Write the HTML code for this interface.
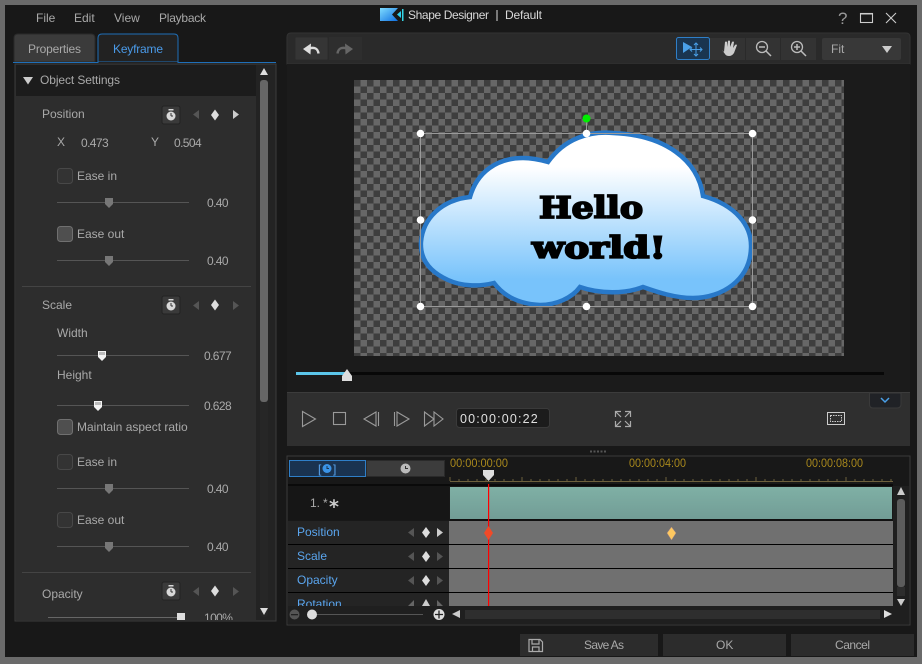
<!DOCTYPE html>
<html><head><meta charset="utf-8"><style>
html,body{margin:0;padding:0;background:#666;width:922px;height:664px;overflow:hidden}
svg{display:block;position:absolute;left:0;top:0}
text{font-family:"Liberation Sans",sans-serif;font-size:12px;fill:#a9a9a9}
.b{fill:#5aa5ee}
.n{letter-spacing:-.6px}
.t{fill:#a8881c;font-size:11.5px}
</style></head><body>
<svg width="922" height="664" viewBox="0 0 922 664" xmlns="http://www.w3.org/2000/svg">
<defs>
<pattern id="ck" x="354" y="80" width="13" height="13" patternUnits="userSpaceOnUse">
<rect width="13" height="13" fill="#676767"/><rect width="6.5" height="6.5" fill="#3e3e3e"/><rect x="6.5" y="6.5" width="6.5" height="6.5" fill="#3e3e3e"/>
</pattern>
<linearGradient id="cg" x1="0" y1="0" x2="0" y2="1"><stop offset=".2" stop-color="#fff"/><stop offset=".85" stop-color="#78c3fb"/></linearGradient>
<linearGradient id="tg" x1="0" y1="0" x2="0" y2="1"><stop offset="0" stop-color="#7fb0a5"/><stop offset="1" stop-color="#729d96"/></linearGradient>
<linearGradient id="lg" x1="0" y1="0" x2="1" y2="1"><stop offset="0" stop-color="#7fdcff"/><stop offset="1" stop-color="#0f6fe0"/></linearGradient>
<symbol id="kf" overflow="visible"><path d="M-4 0L0-5.500L4 0L0 5.500Z"/></symbol>
<g id="stop"><rect x="-9" y="-9" width="18" height="18" rx="2" fill="#3a3a3a" stroke="#222"/><circle cy="1" r="4.500" fill="#d8d8d8"/><rect x="-2.500" y="-6" width="5" height="1.500" fill="#d8d8d8"/><path d="M0 1V-2M0 1H2" stroke="#333" fill="none"/></g>
<g id="sl"><path d="M-4-5H4V1L0 5L-4 1Z" fill="#777"/></g>
<g id="slw"><path d="M-4-5H4V1L0 5L-4 1Z" fill="#f2f2f2"/><rect x="-3" y="-4" width="6" height="3" fill="#bbb"/></g>
</defs>

<rect width="922" height="664" fill="#6a6a6a"/>
<rect x="5" y="5" width="912" height="652" fill="#181818"/>

<!-- title -->
<text x="36" y="22">File</text><text x="74" y="22">Edit</text><text x="114" y="22">View</text><text x="159" y="22" textLength="47">Playback</text>
<path d="M380 8H398L392 14.500L398 21H380Z" fill="url(#lg)"/>
<path d="M397 14.500L401 11V18Z" fill="#2fd0f0"/><rect x="402" y="9" width="1.500" height="12" fill="#35d5e5"/>
<text x="408" y="19" style="fill:#d8d8d8" textLength="81">Shape Designer</text><rect x="496.500" y="10" width="1" height="11" fill="#ddd"/><text x="505" y="19" style="fill:#d8d8d8" textLength="37">Default</text>
<text x="838" y="24" style="font-size:17px;fill:#999">?</text>
<rect x="860.500" y="13.500" width="12" height="9" fill="none" stroke="#ccc" stroke-width="1.100"/><rect x="860" y="13" width="13" height="1.500" fill="#ccc"/>
<path d="M886 13L896 23M896 13L886 23" stroke="#ccc" stroke-width="1.100"/>

<!-- left tabs -->
<path d="M14 62V38Q14 34 18 34H91Q95 34 95 38V62Z" fill="#3b3b3b" stroke="#2a2a2a"/>
<text x="28" y="53" style="fill:#a9a9a9" textLength="53">Properties</text>
<path d="M98 62V38Q98 34 102 34H174Q178 34 178 38V62Z" fill="#222" stroke="#1f6fb8"/>
<text x="113" y="53" style="fill:#4a9ae8" textLength="50">Keyframe</text>
<rect x="13" y="62" width="263" height="1" fill="#1f6fb8"/>
<rect x="98.500" y="62" width="79" height="1" fill="#222"/>

<!-- left panel -->
<rect x="15" y="64" width="261" height="557" fill="#232323" stroke="#3b3b3b"/>
<rect x="16" y="65" width="240" height="31" fill="#1c1c1c"/>
<rect x="16" y="96" width="240" height="524" fill="#2d2d2d"/>
<path d="M23 77H33L28 84.500Z" fill="#ccc"/>
<text x="40" y="84" textLength="80">Object Settings</text>
<rect x="260" y="80" width="8" height="537" rx="3" fill="#262626"/>
<rect x="260" y="80" width="8" height="322" rx="3" fill="#666"/>
<path d="M264 68L260 75H268Z" fill="#ddd"/><path d="M260 608H268L264 615Z" fill="#ddd"/>

<text x="42" y="118">Position</text>
<use href="#stop" x="171" y="115"/>
<path d="M199 110V119L193 114.500Z" fill="#555"/><use href="#kf" x="215" y="115" fill="#ddd"/><path d="M233 110V119L239 114.500Z" fill="#ccc"/>
<text x="57" y="146">X</text><text x="81" y="147" class="n">0.473</text><text x="151" y="146">Y</text><text x="174" y="147" class="n">0.504</text>

<rect x="57.500" y="168.500" width="15" height="15" rx="3" fill="#333" stroke="#484848"/>
<text x="77" y="180">Ease in</text>
<rect x="57" y="202" width="132" height="1" fill="#555"/><use href="#sl" x="109" y="203"/><text x="207" y="207" class="n">0.40</text>

<rect x="57.500" y="226.500" width="15" height="15" rx="3" fill="#4f4f4f" stroke="#707070"/>
<text x="77" y="238">Ease out</text>
<rect x="57" y="260" width="132" height="1" fill="#555"/><use href="#sl" x="109" y="261"/><text x="207" y="265" class="n">0.40</text>
<rect x="22" y="286" width="229" height="1" fill="#444"/>

<text x="42" y="309">Scale</text>
<use href="#stop" x="171" y="305"/>
<path d="M199 301V310L193 305.500Z" fill="#555"/><use href="#kf" x="215" y="305" fill="#ddd"/><path d="M233 301V310L239 305.500Z" fill="#555"/>
<text x="57" y="337">Width</text>
<rect x="57" y="355" width="132" height="1" fill="#555"/><use href="#slw" x="102" y="356"/><text x="204" y="360" class="n">0.677</text>
<text x="57" y="379">Height</text>
<rect x="57" y="405" width="132" height="1" fill="#555"/><use href="#slw" x="98" y="406"/><text x="204" y="410" class="n">0.628</text>
<rect x="57.500" y="419.500" width="15" height="15" rx="3" fill="#4f4f4f" stroke="#707070"/>
<text x="77" y="431">Maintain aspect ratio</text>
<rect x="57.500" y="454.500" width="15" height="15" rx="3" fill="#333" stroke="#484848"/>
<text x="77" y="466">Ease in</text>
<rect x="57" y="488" width="132" height="1" fill="#555"/><use href="#sl" x="109" y="489"/><text x="207" y="493" class="n">0.40</text>
<rect x="57.500" y="512.500" width="15" height="15" rx="3" fill="#333" stroke="#484848"/>
<text x="77" y="524">Ease out</text>
<rect x="57" y="546" width="132" height="1" fill="#555"/><use href="#sl" x="109" y="547"/><text x="207" y="551" class="n">0.40</text>
<rect x="22" y="572" width="229" height="1" fill="#444"/>
<text x="42" y="598">Opacity</text>
<use href="#stop" x="171" y="591"/>
<path d="M199 587V596L193 591.500Z" fill="#555"/><use href="#kf" x="215" y="591" fill="#ddd"/><path d="M233 587V596L239 591.500Z" fill="#555"/>
<rect x="48" y="617" width="130" height="1" fill="#666"/>
<rect x="177" y="613" width="8" height="7" fill="#ddd"/>
<svg x="200" y="610" width="40" height="10"><text x="4" y="12" class="n">100%</text></svg>

<!-- toolbar -->
<path d="M287 64V37Q287 33 291 33H906Q910 33 910 37V64Z" fill="#2a2a2a" stroke="#333"/>
<rect x="295" y="37" width="33" height="23" rx="1" fill="#353535" stroke="#2a2a2a"/>
<rect x="329" y="37" width="33" height="23" fill="#2e2e2e"/>
<path d="M303 49L311 43.500L310.500 54.500Z" fill="#ddd"/><path d="M309 48.500Q317.500 46 318.500 53.500" fill="none" stroke="#ddd" stroke-width="2.400"/>
<path d="M353 49L345 43.500L345.500 54.500Z" fill="#666"/><path d="M347 48.500Q338.500 46 337.500 53.500" fill="none" stroke="#666" stroke-width="2.400"/>
<rect x="676.500" y="37.500" width="33" height="22" rx="2" fill="#1a3550" stroke="#2f7fc8"/>
<path d="M683 42V53L692 47Z" fill="#4aa0e8"/><path d="M696 43V56M690 49.500H702M694 45L696 43L698 45M694 54L696 56L698 54M692 47.500L690 49.500L692 51.500M700 47.500L702 49.500L700 51.500" stroke="#4aa0e8" fill="none"/>
<rect x="710" y="38" width="35" height="22" fill="#333"/><rect x="746" y="38" width="34" height="22" fill="#333"/><rect x="781" y="38" width="35" height="22" fill="#333"/>
<path d="M722 50L724 52L725 42Q726 41 727 42L727 47L728 41Q729 40 730 41L730 47L732 42Q733 41 734 42L733 48L735 45Q736 44 737 45L734 53Q732 56 729 56Q726 56 725 54Z" fill="#ccc"/>
<circle cx="762" cy="47" r="5.500" fill="none" stroke="#bbb" stroke-width="1.300"/><path d="M759 47H765M766 51L771 56" stroke="#bbb" stroke-width="1.500"/>
<circle cx="797" cy="47" r="5.500" fill="none" stroke="#bbb" stroke-width="1.300"/><path d="M794 47H800M797 44V50M801 51L806 56" stroke="#bbb" stroke-width="1.500"/>
<rect x="822" y="38" width="79" height="22" rx="2" fill="#383838"/>
<text x="831" y="53">Fit</text><path d="M882 46H892L887 53Z" fill="#ccc"/>

<!-- preview -->
<rect x="287" y="64" width="623" height="329" fill="#1b1b1b"/>
<rect x="354" y="80" width="490" height="276" fill="url(#ck)"/>
<path d="M548 162C565 138 590 131 613 133C665 135 698 160 703 196C735 205 752 225 751 248C750 280 722 298 693 298C675 298 657 292 643 287C625 294 600 294 580 287C572 298 556 305 540 305C518 304 503 295 494 283C478 287 461 286 448 280C428 271 420 258 421 242C423 218 442 200 470 197C477 172 497 158 523 158C532 158 541 160 548 162Z" fill="url(#cg)" stroke="#2878c8" stroke-width="4.500"/>
<text x="591" y="218" text-anchor="middle" textLength="104" lengthAdjust="spacingAndGlyphs" style="font-family:'DejaVu Serif',serif;font-weight:bold;font-size:30px;fill:#000;stroke:#000;stroke-width:1.800">Hello</text>
<text x="599" y="258" text-anchor="middle" textLength="134" lengthAdjust="spacingAndGlyphs" style="font-family:'DejaVu Serif',serif;font-weight:bold;font-size:30px;fill:#000;stroke:#000;stroke-width:1.800">world!</text>
<rect x="420.500" y="133.500" width="332" height="173" fill="none" stroke="#999"/>
<path d="M586.500 122V133" stroke="#999"/>
<g fill="#fff"><circle cx="420.500" cy="133.500" r="3.800"/><circle cx="586.500" cy="133.500" r="3.800"/><circle cx="752.500" cy="133.500" r="3.800"/><circle cx="420.500" cy="220" r="3.800"/><circle cx="752.500" cy="220" r="3.800"/><circle cx="420.500" cy="306.500" r="3.800"/><circle cx="586.500" cy="306.500" r="3.800"/><circle cx="752.500" cy="306.500" r="3.800"/></g>
<circle cx="586.500" cy="118.500" r="4" fill="#0e0"/>

<rect x="296" y="372" width="588" height="3" fill="#080808"/>
<rect x="296" y="372" width="51" height="3" fill="#5cc6ea"/>
<path d="M347 369L352 376V381H342V376Z" fill="#ddd"/>

<!-- controls -->
<rect x="287" y="392" width="623" height="54" fill="#2f2f2f"/>
<rect x="287" y="392" width="623" height="1" fill="#3c3c3c"/>
<g fill="none" stroke="#9a9a9a" stroke-width="1.100">
<path d="M302.500 411.500V426.500L315.500 419Z"/>
<rect x="333.500" y="412.500" width="12" height="12"/>
<path d="M376 412L364 419L376 426Z"/><path d="M378.500 412V426"/>
<path d="M394.500 412V426"/><path d="M397 412L409 419L397 426Z"/>
<path d="M424.500 412V426L434 419ZM434 412V426L443 419Z"/>
</g>
<rect x="456.500" y="408.500" width="93" height="19" rx="3" fill="#1c1c1c" stroke="#3a3a3a"/>
<text x="460" y="423" style="fill:#e0e0e0;font-size:12.500px;letter-spacing:1.170px">00:00:00:22</text>
<path d="M615.500 417V411.500H621M630.500 417V411.500H625M615.500 421V426.500H621M630.500 421V426.500H625M616 412L621 417M630 412L625 417M616 426L621 421M630 426L625 421" fill="none" stroke="#aaa" stroke-width="1.200"/>
<rect x="827.500" y="412.500" width="17" height="12" fill="none" stroke="#ccc"/><rect x="830.500" y="415.500" width="11" height="6" fill="none" stroke="#ccc" stroke-dasharray="1.500 1"/>
<path d="M869.500 393V404Q869.500 408 873 408H897Q901 408 901 404V393Z" fill="#202226" stroke="#3a3a3a"/>
<path d="M881 398L885 402L889 398" fill="none" stroke="#4aa0e8" stroke-width="1.500"/>
<path d="M590 451.500H607" stroke="#555" stroke-dasharray="2 1.500" stroke-width="2"/>

<!-- timeline -->
<rect x="287" y="456" width="623" height="169" fill="#181818" stroke="#3a3a3a"/>
<rect x="289.500" y="460.500" width="76" height="16" fill="#1a3350" stroke="#2f7fc8"/>
<rect x="366.500" y="460.500" width="78" height="16" fill="#3c3c3c" stroke="#2a2a2a"/>
<text x="318" y="473" class="b">[</text><circle cx="327" cy="468.500" r="4.500" fill="#3a94e8"/><path d="M327 466V468.500H329" stroke="#1a3350" fill="none"/><text x="333" y="473" class="b">]</text>
<circle cx="405.500" cy="468.500" r="5" fill="#bbb"/><path d="M405.500 466V468.500H408" stroke="#333" fill="none"/>
<text x="450" y="467" class="t" textLength="58" lengthAdjust="spacingAndGlyphs">00:00:00:00</text>
<text x="629" y="467" class="t" textLength="57" lengthAdjust="spacingAndGlyphs">00:00:04:00</text>
<text x="806" y="467" class="t" textLength="57" lengthAdjust="spacingAndGlyphs">00:00:08:00</text>
<rect x="450" y="481" width="443" height="1" fill="#6d5f3c"/>
<path d="M450 481v-4M459 481v-2M468 481v-2M477 481v-2M486 481v-2M495 481v-2M504 481v-2M513 481v-2M522 481v-4M531 481v-2M540 481v-2M549 481v-2M558 481v-2M567 481v-2M576 481v-4M585 481v-2M594 481v-2M603 481v-2M612 481v-2M621 481v-2M630 481v-2M639 481v-2M648 481v-2M657 481v-2M666 481v-4M675 481v-2M684 481v-2M693 481v-2M702 481v-2M711 481v-2M720 481v-2M729 481v-2M738 481v-2M747 481v-2M756 481v-4M765 481v-2M774 481v-2M783 481v-2M792 481v-2M801 481v-2M810 481v-2M819 481v-2M828 481v-2M837 481v-2M846 481v-4M855 481v-2M864 481v-2M873 481v-2M882 481v-2M891 481v-2" stroke="#6d5f3c"/>
<rect x="288" y="484" width="605" height="2" fill="#0a0a0a"/>
<rect x="288" y="486" width="161" height="34" fill="#161616"/>
<rect x="450" y="487" width="442" height="32" fill="url(#tg)"/>
<rect x="450" y="519" width="443" height="2" fill="#111"/>
<text x="310" y="507">1.</text><text x="323" y="507">*</text><text x="329" y="513" style="font-family:'DejaVu Sans',sans-serif;font-size:19px;font-weight:bold;fill:#ccc">*</text>
<rect x="288" y="521" width="161" height="85" fill="#242424"/>
<rect x="449" y="521" width="444" height="85" fill="#707070"/>
<rect x="288" y="544" width="605" height="1" fill="#000"/><rect x="288" y="568" width="605" height="1" fill="#000"/><rect x="288" y="592" width="605" height="1" fill="#000"/>
<text x="297" y="536" class="b">Position</text><text x="297" y="560" class="b">Scale</text><text x="297" y="584" class="b">Opacity</text><text x="297" y="608" class="b">Rotation</text>
<path d="M414 528V537L408 532.500Z" fill="#555"/><use href="#kf" x="426" y="532.500" fill="#ddd"/><path d="M437 528V537L443 532.500Z" fill="#ccc"/>
<path d="M414 552V561L408 556.500Z" fill="#555"/><use href="#kf" x="426" y="556.500" fill="#ddd"/><path d="M437 552V561L443 556.500Z" fill="#555"/>
<path d="M414 576V585L408 580.500Z" fill="#555"/><use href="#kf" x="426" y="580.500" fill="#ddd"/><path d="M437 576V585L443 580.500Z" fill="#555"/>
<path d="M414 600V606H408ZM437 600L443 606H437Z" fill="#666"/><path d="M422 606L426 599L430 606Z" fill="#ccc"/>
<rect x="488" y="484" width="1.200" height="122" fill="#f00"/>
<path d="M484 533L488.500 526L493 533L488.500 540Z" fill="#f04a28"/>
<path d="M667 533L671.500 527L676 533L671.500 540Z" fill="#fdc860" stroke="#a88" stroke-width=".5"/>
<path d="M483 470H494V475L488.500 481L483 475Z" fill="#ddd"/>
<rect x="288" y="606" width="605" height="18" fill="#1f1f1f"/>
<circle cx="294.500" cy="614.500" r="5" fill="#555"/><rect x="291" y="614" width="7" height="1.300" fill="#222"/>
<rect x="312" y="614" width="111" height="1" fill="#555"/><circle cx="312" cy="614.500" r="5" fill="#ddd"/>
<circle cx="439" cy="614.500" r="5.500" fill="#ddd"/><path d="M435 614.500H443M439 610.500V618.500" stroke="#222" stroke-width="1.300"/>
<path d="M460 610V618L452 614Z" fill="#ccc"/><rect x="465" y="610" width="415" height="9" fill="#2e2e2e"/>
<path d="M884 610V618L892 614Z" fill="#ddd"/>
<rect x="893" y="486" width="16" height="138" fill="#1f1f1f"/>
<path d="M901 487L897 495H905Z" fill="#ccc"/><path d="M897 599H905L901 606Z" fill="#ccc"/>
<rect x="897" y="499" width="8" height="88" rx="3" fill="#5c5c5c"/>
<rect x="897" y="587" width="8" height="9" fill="#2d2d2d"/>

<!-- buttons -->
<rect x="520" y="634" width="138" height="22" fill="#2c2c2c"/>
<rect x="663" y="634" width="123" height="22" fill="#2c2c2c"/>
<rect x="791" y="634" width="123" height="22" fill="#2c2c2c"/>
<path d="M529 639.500H540L542.500 642V651.500H529ZM532 640V644H539V640M532.500 651.500V647H539V651.500" fill="none" stroke="#aaa" stroke-width="1.200"/>
<text x="584" y="649" textLength="40">Save As</text><text x="716" y="649">OK</text><text x="835" y="649" textLength="35">Cancel</text>
</svg>
</body></html>
